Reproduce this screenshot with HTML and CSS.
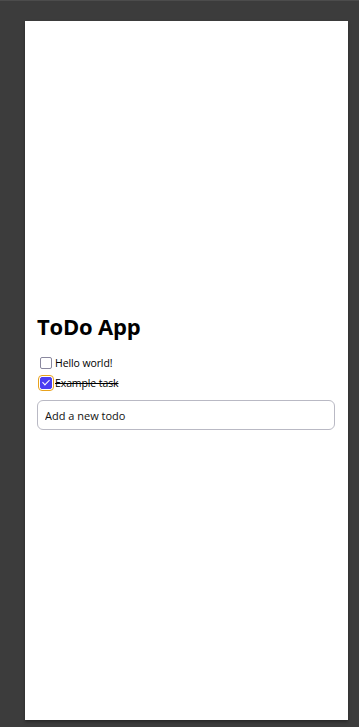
FILE: index.html
```html
<!DOCTYPE html>
<html>
	<head>
		<meta charset="utf-8" />
		<title>ToDo App</title>
		<link rel="stylesheet" href="styles.css">
	</head>
	<body>
		<div class="panel">
			<div class="app">
				<h1 class="title">ToDo App</h1>
				<ul class="list">
					<li class="item">
						<input type="checkbox" class="check" id="t1">
						<label for="t1">Hello world!</label>
					</li>
					<li class="item done">
						<input type="checkbox" class="check focus" id="t2" checked>
						<label for="t2">Example task</label>
					</li>
				</ul>
				<input type="text" class="new" placeholder="Add a new todo">
			</div>
		</div>
	</body>
</html>
```

FILE: styles.css
```css
* {
	padding: 0px;
	margin: 0px;
	box-sizing: border-box;
}

html {
	background-color: #3c3c3c;
}

body {
	border-top: 1px solid #4c4c4c;
	padding: 20px 11px 7px 25px;
	font-family: "Open Sans", "Noto Sans", sans-serif;
	color: #000;
}

.panel {
	width: 323px;
	height: 699px;
	background: #fff;
	box-shadow: 0 2px 3px rgba(0,0,0,0.35);
	display: flex;
	flex-direction: column;
	justify-content: center;
	padding: 0 13px 0 12px;
}

.title {
	font-size: 22px;
	font-weight: 700;
	line-height: 30px;
	letter-spacing: -0.2px;
	margin-bottom: 12px;
}

.list {
	list-style: none;
}

.item {
	display: flex;
	align-items: center;
	height: 20px;
	font-size: 10.5px;
	letter-spacing: -0.1px;
	padding-left: 3px;
}

.item label {
	margin-left: 3px;
}

.done label {
	text-decoration: line-through;
}

.check {
	appearance: none;
	-webkit-appearance: none;
	width: 12px;
	height: 12px;
	border: 1.5px solid #8a889e;
	border-radius: 2px;
	background: #fff;
	position: relative;
}

.check:checked {
	background: #4a3df2;
	border-color: #4a3df2;
}

.check:checked::after {
	content: "";
	position: absolute;
	left: 3px;
	top: 0px;
	width: 3px;
	height: 6px;
	border: solid #fff;
	border-width: 0 1.5px 1.5px 0;
	transform: rotate(45deg);
}

.focus {
	outline: 1.5px solid #e8a21d;
	outline-offset: 1px;
}

.new {
	display: block;
	width: 100%;
	height: 30px;
	margin-top: 7px;
	border: 1px solid #b9b9c4;
	border-radius: 6px;
	padding: 0 7px;
	font-family: inherit;
	font-size: 11px;
}

.new::placeholder {
	color: #111;
}
```
